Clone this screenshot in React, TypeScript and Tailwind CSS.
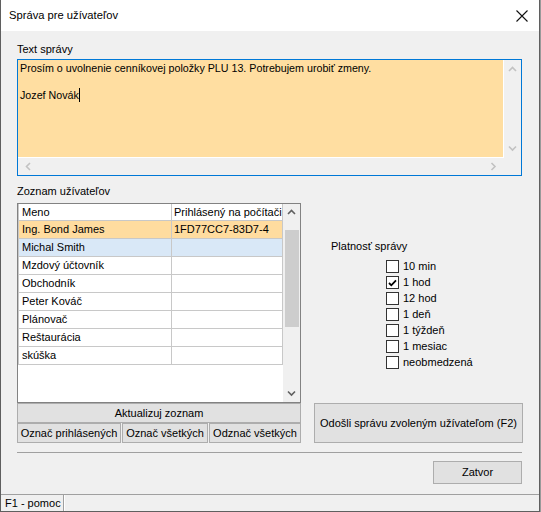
import React from "react";

const F = { fontFamily: '"Liberation Sans", Arial, sans-serif' };

function Chevron({ dir, color }: { dir: "up" | "down" | "left" | "right"; color: string }) {
  const paths: Record<string, string> = {
    up: "M1 5 L4.5 1.5 L8 5",
    down: "M1 1.5 L4.5 5 L8 1.5",
    left: "M5 1 L1.5 4.5 L5 8",
    right: "M1.5 1 L5 4.5 L1.5 8",
  };
  const vert = dir === "up" || dir === "down";
  return (
    <svg width={vert ? 9 : 7} height={vert ? 7 : 9} viewBox={vert ? "0 0 9 7" : "0 0 7 9"}>
      <path d={paths[dir]} fill="none" stroke={color} strokeWidth="1.6" />
    </svg>
  );
}

const users: { name: string; pc: string; bg: string }[] = [
  { name: "Ing. Bond James", pc: "1FD77CC7-83D7-4", bg: "bg-[#ffdc9f]" },
  { name: "Michal Smith", pc: "", bg: "bg-[#d9e8f7]" },
  { name: "Mzdový účtovník", pc: "", bg: "bg-white" },
  { name: "Obchodník", pc: "", bg: "bg-white" },
  { name: "Peter Kováč", pc: "", bg: "bg-white" },
  { name: "Plánovač", pc: "", bg: "bg-white" },
  { name: "Reštaurácia", pc: "", bg: "bg-white" },
  { name: "skúška", pc: "", bg: "bg-white" },
];

const periods: { label: string; checked: boolean }[] = [
  { label: "10 min", checked: false },
  { label: "1 hod", checked: true },
  { label: "12 hod", checked: false },
  { label: "1 deň", checked: false },
  { label: "1 týždeň", checked: false },
  { label: "1 mesiac", checked: false },
  { label: "neobmedzená", checked: false },
];

export default function App() {
  return (
    <div className="w-[541px] h-[512px] bg-[#9a9a9a] overflow-hidden" style={F}>
      <div className="w-[540px] h-[512px] flex flex-col bg-[#f0f0f0] border-l border-r border-b border-[#5f5f5f] text-[11px] leading-[13px] text-black">
        {/* Title bar */}
        <div className="h-[31px] bg-white flex items-center justify-between pl-[8px] pr-[10px] shrink-0">
          <span className="text-[11.2px]">Správa pre užívateľov</span>
          <svg width="12" height="12" viewBox="0 0 12 12" className="mr-[1px]">
            <path d="M0.5 0.5 L11.5 11.5 M11.5 0.5 L0.5 11.5" stroke="#111" strokeWidth="1.1" />
          </svg>
        </div>

        {/* Content */}
        <div className="flex-1 flex flex-col pl-[16px]">
          <div className="mt-[12px] h-[13px]">Text správy</div>
          {/* Text box */}
          <div className="mt-[3px] w-[505px] h-[117px] border border-[#0078d7] flex flex-col">
            <div className="flex h-[98px]">
              <div className="w-[486px] h-[98px] bg-[#ffdea1] border-r border-b border-white pl-[2px] pt-[2px] text-[10.7px]">
                <div>Prosím o uvolnenie cenníkovej položky PLU 13. Potrebujem urobiť zmeny.</div>
                <div className="h-[13px]"></div>
                <div className="flex items-center">
                  <span>Jozef Novák</span>
                  <span className="inline-block w-[1px] h-[14px] bg-black"></span>
                </div>
              </div>
              <div className="flex-1 flex flex-col items-center justify-between py-[6px]">
                <Chevron dir="up" color="#c2c2c2" />
                <Chevron dir="down" color="#c2c2c2" />
              </div>
            </div>
            <div className="flex-1 flex items-center justify-between pl-[7px] pr-[24px]">
              <Chevron dir="left" color="#c2c2c2" />
              <Chevron dir="right" color="#c2c2c2" />
            </div>
          </div>

          {/* Lower section */}
          <div className="mt-[9px] flex">
            {/* Left column */}
            <div className="w-[284px] flex flex-col">
              <div className="h-[13px]">Zoznam užívateľov</div>
              <div className="mt-[5px] h-[200px] border border-[#828282] bg-white flex">
                <div className="w-[265px] flex flex-col">
                  <div className="flex h-[17px] border-b border-[#c8c8c8]">
                    <div className="w-[154px] border-l border-r border-[#c8c8c8] pl-[3px] flex items-center">Meno</div>
                    <div className="w-[111px] border-r border-[#c8c8c8] pl-[2px] flex items-center whitespace-nowrap overflow-hidden">Prihlásený na počítači</div>
                  </div>
                  {users.map((u) => (
                    <div key={u.name} className={`flex h-[18px] border-b border-[#c8c8c8] ${u.bg}`}>
                      <div className="w-[154px] border-l border-r border-[#c8c8c8] pl-[3px] flex items-center">{u.name}</div>
                      <div className="w-[111px] border-r border-[#c8c8c8] pl-[2px] flex items-center">{u.pc}</div>
                    </div>
                  ))}
                </div>
                <div className="flex-1 bg-[#f0f0f0] flex flex-col items-center">
                  <div className="h-[17px] flex items-center">
                    <Chevron dir="up" color="#606060" />
                  </div>
                  <div className="mt-[9px] w-[14px] h-[97px] bg-[#cdcdcd]"></div>
                  <div className="mt-auto h-[17px] flex items-center">
                    <Chevron dir="down" color="#606060" />
                  </div>
                </div>
              </div>
              <button className="h-[20px] w-full border border-[#adadad] bg-[#e1e1e1] flex items-center justify-center">
                Aktualizuj zoznam
              </button>
              <div className="flex gap-[1px]">
                <button className="w-[104px] h-[20px] border border-[#adadad] bg-[#e1e1e1] flex items-center justify-center whitespace-nowrap">
                  Označ prihlásených
                </button>
                <button className="w-[86px] h-[20px] border border-[#adadad] bg-[#e1e1e1] flex items-center justify-center whitespace-nowrap">
                  Označ všetkých
                </button>
                <button className="flex-1 h-[20px] border border-[#adadad] bg-[#e1e1e1] flex items-center justify-center whitespace-nowrap">
                  Odznač všetkých
                </button>
              </div>
            </div>

            {/* Right column */}
            <div className="w-[209px] ml-[13px] flex flex-col">
              <div className="mt-[55px] pl-[17px] h-[13px]">Platnosť správy</div>
              <div className="mt-[7px] pl-[72px] flex flex-col gap-[3px]">
                {periods.map((p) => (
                  <div key={p.label} className="flex items-center h-[13px]">
                    <div className="w-[13px] h-[13px] border border-[#333333] bg-white flex items-center justify-center">
                      {p.checked && (
                        <svg width="9" height="8" viewBox="0 0 9 8">
                          <path d="M1 4 L3.3 6.3 L8 1.3" fill="none" stroke="#000" strokeWidth="1.8" />
                        </svg>
                      )}
                    </div>
                    <span className="ml-[4px]">{p.label}</span>
                  </div>
                ))}
              </div>
              <button className="mt-auto h-[40px] w-full border border-[#adadad] bg-[#e1e1e1] flex items-center justify-center whitespace-nowrap">
                Odošli správu zvoleným užívateľom (F2)
              </button>
            </div>
          </div>

          <div className="mt-[9px] w-[505px] border-t border-[#a0a0a0]"></div>
          <div className="mt-[8px] w-[505px] flex justify-end">
            <button className="w-[89px] h-[23px] border border-[#adadad] bg-[#e1e1e1] flex items-center justify-center">
              Zatvor
            </button>
          </div>
        </div>

        {/* Status bar */}
        <div className="h-[17px] border-t border-[#a0a0a0] flex shrink-0">
          <div className="w-[62px] ml-[1px] border-r border-[#a0a0a0] pl-[3px] flex items-center whitespace-nowrap text-[11px]">F1 - pomoc</div>
          <div className="flex-1 border-l border-white"></div>
        </div>
      </div>
    </div>
  );
}
